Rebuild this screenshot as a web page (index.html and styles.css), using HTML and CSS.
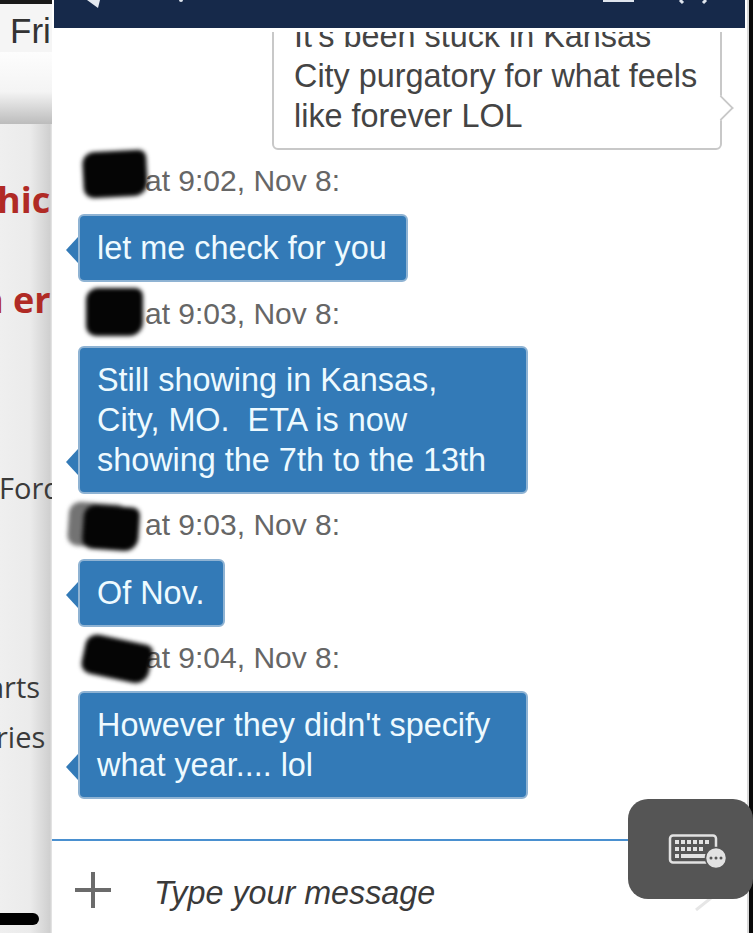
FILE: index.html
```html
<!DOCTYPE html>
<html lang="en">
<head>
    <meta charset="UTF-8">
    <meta name="viewport" content="width=device-width, initial-scale=1.0">
    <title>Chat</title>
    <link rel="stylesheet" href="styles.css">
</head>
<body>

    <div id="screen">
        <div class="backdrop">
            <div class="back-top"><span class="back-fri">Fri</span></div>
            <div class="back-shade"></div>
            <div class="back-list">
                <span class="back-red back-hic">hic</span>
                <span class="back-red back-er">n er</span>
                <span class="back-text back-ford">Ford</span>
                <span class="back-text back-arts">arts</span>
                <span class="back-text back-ries">ries</span>
            </div>
            <div class="back-pill"></div>
        </div>

        <div class="chat">
            <div class="chat-header">
                <svg class="icon-back" width="130" height="10" viewBox="0 0 130 10"><path d="M0 0 L13 0 L11 8 Z" fill="#e4e8ef"/><circle cx="94" cy="0" r="2" fill="#dfe5ee"/></svg>
                <div class="header-actions">
                    <svg width="34" height="6" viewBox="0 0 34 6"><rect x="3" y="0" width="32" height="2" fill="#dfe5ee"/></svg>
                    <svg width="34" height="6" viewBox="0 0 34 6"><path d="M4 0 L7 3 M30 0 L27 3" stroke="#dfe5ee" stroke-width="3"/></svg>
                </div>
            </div>

            <div class="messages">
                <div class="msg-mine">
                    <div class="bubble bubble-out">It's been stuck in Kansas<br>City purgatory for what feels<br>like forever LOL</div>
                </div>

                <div class="meta meta-1"><span class="blot blot-1"></span>at 9:02, Nov 8:</div>
                <div class="bubble bubble-in">let me check for you</div>

                <div class="meta meta-2"><span class="blot blot-2"></span>at 9:03, Nov 8:</div>
                <div class="bubble bubble-in bubble-wide">Still showing in Kansas,<br>City, MO.&nbsp; ETA is now<br>showing the 7th to the 13th</div>

                <div class="meta meta-3"><span class="blot blot-3"></span>at 9:03, Nov 8:</div>
                <div class="bubble bubble-in">Of Nov.</div>

                <div class="meta meta-4"><span class="blot blot-4"></span>at 9:04, Nov 8:</div>
                <div class="bubble bubble-in bubble-wide">However they didn't specify<br>what year.... lol</div>
            </div>

            <div class="composer">
                <svg class="icon-plus" width="36" height="36" viewBox="0 0 36 36"><path d="M18 0 V36 M0 18 H36" stroke="#6b6b6b" stroke-width="4"/></svg>
                <span class="placeholder">Type your message</span>
                <svg class="icon-send" width="18" height="14" viewBox="0 0 18 14"><path d="M1 13 L16 1" stroke="#e6e6e6" stroke-width="3"/></svg>
            </div>
        </div>

        <div class="edge"></div>

        <div class="keyboard-btn">
            <svg width="60" height="36" viewBox="0 0 60 36">
                <rect x="2" y="1.5" width="46" height="27" rx="3" fill="none" stroke="#e2e2e2" stroke-width="2.5"/>
                <g fill="#e2e2e2">
                    <rect x="7" y="6" width="4" height="4"/><rect x="13" y="6" width="4" height="4"/><rect x="19" y="6" width="4" height="4"/><rect x="25" y="6" width="4" height="4"/><rect x="31" y="6" width="4" height="4"/><rect x="37" y="6" width="4" height="4"/>
                    <rect x="7" y="13" width="4" height="4"/><rect x="13" y="13" width="4" height="4"/><rect x="19" y="13" width="4" height="4"/><rect x="25" y="13" width="4" height="4"/><rect x="31" y="13" width="4" height="4"/>
                    <rect x="7" y="20" width="4" height="4"/><rect x="13" y="20" width="26" height="4"/>
                </g>
                <circle cx="48" cy="24" r="10.5" fill="#e2e2e2" stroke="#555" stroke-width="1.5"/>
                <g fill="#555"><circle cx="43" cy="24" r="1.5"/><circle cx="48" cy="24" r="1.5"/><circle cx="53" cy="24" r="1.5"/></g>
            </svg>
        </div>
    </div>

</body>
</html>
```

FILE: styles.css
```css
html, body {
    margin: 0;
    padding: 0;
    height: 100%;
}

body {
    font-family: "Liberation Sans", Arial, sans-serif;
    background-color: #fff;
    overflow: hidden;
}

#screen {
    position: relative;
    display: flex;
    width: 753px;
    height: 933px;
    overflow: hidden;
}

/* page behind the chat panel */
.backdrop {
    display: flex;
    flex-direction: column;
    position: relative;
    width: 52px;
    flex-shrink: 0;
    overflow: hidden;
    background: linear-gradient(90deg, #efefef 0, #ebebeb 30px, #cfcfcf 50px, #e8e8e8 52px);
    font-family: "Open Sans", sans-serif;
}

.back-top {
    height: 52px;
    box-sizing: border-box;
    border-top: 4px solid #1a1a1a;
    background-color: #f5f5f5;
    padding-left: 10px;
    font-family: "Liberation Sans", Arial, sans-serif;
}

.back-fri {
    font-size: 35px;
    line-height: 54px;
    color: #333;
}

.back-shade {
    height: 72px;
    background: linear-gradient(180deg, #fdfdfd 0, #f4f4f4 55%, #bcbcbc 100%);
}

.back-list {
    display: flex;
    flex-direction: column;
    flex: 1;
    white-space: nowrap;
}

.back-red {
    color: #b02a25;
    font-weight: 700;
    font-size: 36px;
    line-height: 40px;
}

.back-text {
    color: #3a3a3a;
    font-size: 29px;
    line-height: 36px;
}

.back-hic { margin-top: 56px; margin-left: -3px; }
.back-er { margin-top: 60px; margin-left: -20px; }
.back-ford { margin-top: 150px; margin-left: -1px; }
.back-arts { margin-top: 163px; margin-left: -12px; }
.back-ries { margin-top: 14px; margin-left: -4px; }

.back-pill {
    position: absolute;
    left: -10px;
    top: 913px;
    width: 49px;
    height: 12px;
    background-color: #000;
    border-radius: 6px;
}

/* chat panel */
.chat {
    display: flex;
    flex-direction: column;
    width: 695px;
    flex-shrink: 0;
    background-color: #fff;
}

.chat-header {
    display: flex;
    justify-content: space-between;
    align-items: flex-start;
    height: 28px;
    margin: 0 2px;
    background-color: #16294a;
}

.icon-back {
    margin-left: 33px;
}

.header-actions {
    display: flex;
    gap: 42px;
    margin-right: 35px;
}

.messages {
    display: flex;
    flex-direction: column;
    justify-content: flex-end;
    align-items: flex-start;
    flex-shrink: 0;
    box-sizing: border-box;
    height: 767px;
    margin-top: 4px;
    padding: 0 25px 0 26px;
    overflow: hidden;
}

.msg-mine {
    align-self: flex-end;
    flex-shrink: 0;
}

.bubble {
    position: relative;
    flex-shrink: 0;
    box-sizing: border-box;
    font-size: 32.4px;
    line-height: 40px;
    border-radius: 6px;
    white-space: nowrap;
}

.bubble-in {
    background-color: #337ab7;
    color: #eefaff;
    border: 2px solid #8fb3d3;
    padding: 12px 19px 12px 17px;
}

.bubble-wide {
    width: 450px;
}

.bubble-in::before {
    content: "";
    position: absolute;
    left: -14px;
    bottom: 17px;
    border-style: solid;
    border-width: 13px 12px 13px 0;
    border-color: transparent #337ab7 transparent transparent;
}

.bubble-out {
    width: 450px;
    background-color: #fff;
    color: #444;
    border: 2px solid #c8c8c8;
    padding: 12px 20px;
}

.bubble-out::after {
    content: "";
    position: absolute;
    right: -11px;
    bottom: 30px;
    width: 20px;
    height: 20px;
    background-color: #fff;
    border-top: 2px solid #c8c8c8;
    border-right: 2px solid #c8c8c8;
    box-sizing: border-box;
    transform: rotate(45deg) scale(0.9);
}

.meta {
    display: flex;
    align-items: center;
    flex-shrink: 0;
    position: relative;
    height: 40px;
    font-size: 30px;
    color: #666;
    padding-left: 67px;
}

.meta-1 { margin-top: 11px; margin-bottom: 13px; }
.meta-2 { margin-top: 12px; margin-bottom: 12px; }
.meta-3 { margin-top: 11px; margin-bottom: 14px; }
.meta-4 { margin-top: 11px; margin-bottom: 13px; }

/* scribbled-out sender names */
.blot {
    position: absolute;
    background-color: #050505;
    border-radius: 12px 8px 14px 10px;
    filter: blur(2px);
}

.blot-1 { left: 5px; top: -10px; width: 64px; height: 46px; transform: rotate(-3deg); }
.blot-2 { left: 8px; top: -6px; width: 57px; height: 48px; }
.blot-3 { left: 5px; top: 1px; width: 56px; height: 44px; box-shadow: -15px -2px 0 rgba(90, 90, 90, 0.85); transform: rotate(4deg); }
.blot-4 { left: 5px; top: 1px; width: 68px; height: 40px; transform: rotate(12deg); }

/* bottom input */
.composer {
    display: flex;
    align-items: center;
    position: relative;
    box-sizing: border-box;
    height: 94px;
    margin-top: auto;
    border-top: 2px solid #4a90d0;
    padding-left: 23px;
}

.icon-plus {
    flex-shrink: 0;
    margin-top: 5px;
}

.placeholder {
    margin-left: 43px;
    margin-top: 12px;
    font-style: italic;
    font-size: 32.3px;
    color: #3a3a3a;
}

.icon-send {
    position: absolute;
    right: 34px;
    bottom: 22px;
}

.edge {
    flex: 1;
    background-color: #0a0a0a;
    border-left: 2px solid #d8d8d8;
}

.keyboard-btn {
    position: absolute;
    left: 628px;
    top: 799px;
    width: 125px;
    height: 100px;
    display: flex;
    align-items: center;
    justify-content: center;
    background-color: #555;
    border-radius: 20px;
}

.keyboard-btn svg {
    margin-left: 15px;
    margin-top: 6px;
}
```
